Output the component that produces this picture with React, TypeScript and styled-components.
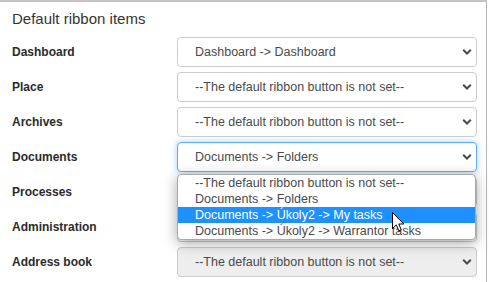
import React from "react";
import styled, { createGlobalStyle, css } from "styled-components";

const GlobalStyle = createGlobalStyle`
  html, body { margin: 0; padding: 0; background: #ffffff; }
  body { font-family: "Liberation Sans", Arial, sans-serif; }
  * { box-sizing: border-box; }
`;

const Panel = styled.div`
  position: relative;
  width: 487px;
  height: 282px;
  border-top: 2px solid #c4c4c4;
  border-right: 1px solid #b4b4b4;
  background: #ffffff;
  padding: 8px 0 0 12px;
`;

const Heading = styled.div`
  font-size: 15px;
  line-height: 18px;
  color: #333333;
  margin-bottom: 9px;
`;

const Form = styled.div`
  display: flex;
  flex-direction: column;
  gap: 5px;
`;

const Row = styled.div`
  display: grid;
  grid-template-columns: 165px 300px;
  align-items: center;
`;

const Label = styled.div`
  font-size: 12px;
  font-weight: 700;
  color: #2b2b2b;
`;

const Field = styled.div`
  position: relative;
`;

type SelectState = "normal" | "focused" | "disabled";

const SelectBox = styled.div<{ $state: SelectState }>`
  height: 30px;
  border: 1px solid #cccccc;
  border-radius: 4px;
  background: #ffffff;
  padding: 0 28px 0 17px;
  display: flex;
  align-items: center;
  font-size: 12.5px;
  color: #4a4a4a;
  white-space: nowrap;
  ${(p) =>
    p.$state === "focused" &&
    css`
      border-color: #66afe9;
      box-shadow: inset 0 1px 1px rgba(0, 0, 0, 0.075), 0 0 6px rgba(102, 175, 233, 0.6);
    `}
  ${(p) =>
    p.$state === "disabled" &&
    css`
      background: #eeeeee;
    `}
`;

const Chevron = styled.svg`
  position: absolute;
  right: 5px;
  top: 50%;
  transform: translateY(-50%);
`;

const DropList = styled.div`
  position: absolute;
  top: calc(100% + 2px);
  left: 0;
  width: 299px;
  z-index: 10;
  background: #ffffff;
  border: 1px solid #a9a9a9;
  border-radius: 4px;
  box-shadow: 0 3px 14px rgba(0, 0, 0, 0.35);
  overflow: hidden;
`;

const Option = styled.div<{ $active?: boolean }>`
  height: 16px;
  line-height: 16px;
  padding-left: 17px;
  font-size: 12.5px;
  color: ${(p) => (p.$active ? "#ffffff" : "#4a4a4a")};
  background: ${(p) => (p.$active ? "#1e90ff" : "transparent")};
  white-space: nowrap;
`;

const Cursor = styled.svg`
  position: absolute;
  left: 392px;
  top: 210px;
  z-index: 20;
`;

const ChevronIcon = () => (
  <Chevron width="10" height="7" viewBox="0 0 10 7">
    <path d="M1.2 1.3 L5 5 L8.8 1.3" fill="none" stroke="#4a4a4a" strokeWidth="2" />
  </Chevron>
);

const Select: React.FC<{ value: string; state?: SelectState; children?: React.ReactNode }> = ({
  value,
  state = "normal",
  children,
}) => (
  <Field>
    <SelectBox $state={state}>{value}</SelectBox>
    <ChevronIcon />
    {children}
  </Field>
);

const NOT_SET = "--The default ribbon button is not set--";

const rows: { label: string; value: string; state?: SelectState; open?: boolean }[] = [
  { label: "Dashboard", value: "Dashboard -> Dashboard" },
  { label: "Place", value: NOT_SET },
  { label: "Archives", value: NOT_SET },
  { label: "Documents", value: "Documents -> Folders", state: "focused", open: true },
  { label: "Processes", value: NOT_SET },
  { label: "Administration", value: NOT_SET },
  { label: "Address book", value: NOT_SET, state: "disabled" },
];

const options = [
  NOT_SET,
  "Documents -> Folders",
  "Documents -> Úkoly2 -> My tasks",
  "Documents -> Úkoly2 -> Warrantor tasks",
];

export default function App() {
  return (
    <>
      <GlobalStyle />
      <Panel>
        <Heading>Default ribbon items</Heading>
        <Form>
          {rows.map((r) => (
            <Row key={r.label}>
              <Label>{r.label}</Label>
              <Select value={r.value} state={r.state}>
                {r.open && (
                  <DropList>
                    {options.map((o, i) => (
                      <Option key={o} $active={i === 2}>
                        {o}
                      </Option>
                    ))}
                  </DropList>
                )}
              </Select>
            </Row>
          ))}
        </Form>
        <Cursor width="14" height="22" viewBox="0 0 14 22">
          <path
            d="M0.5 0.5 L0.5 16.5 L4.3 12.9 L6.8 18.8 L9.2 17.8 L6.8 12 L11.8 12 Z"
            fill="#ffffff"
            stroke="#000000"
            strokeWidth="1"
          />
        </Cursor>
      </Panel>
    </>
  );
}
